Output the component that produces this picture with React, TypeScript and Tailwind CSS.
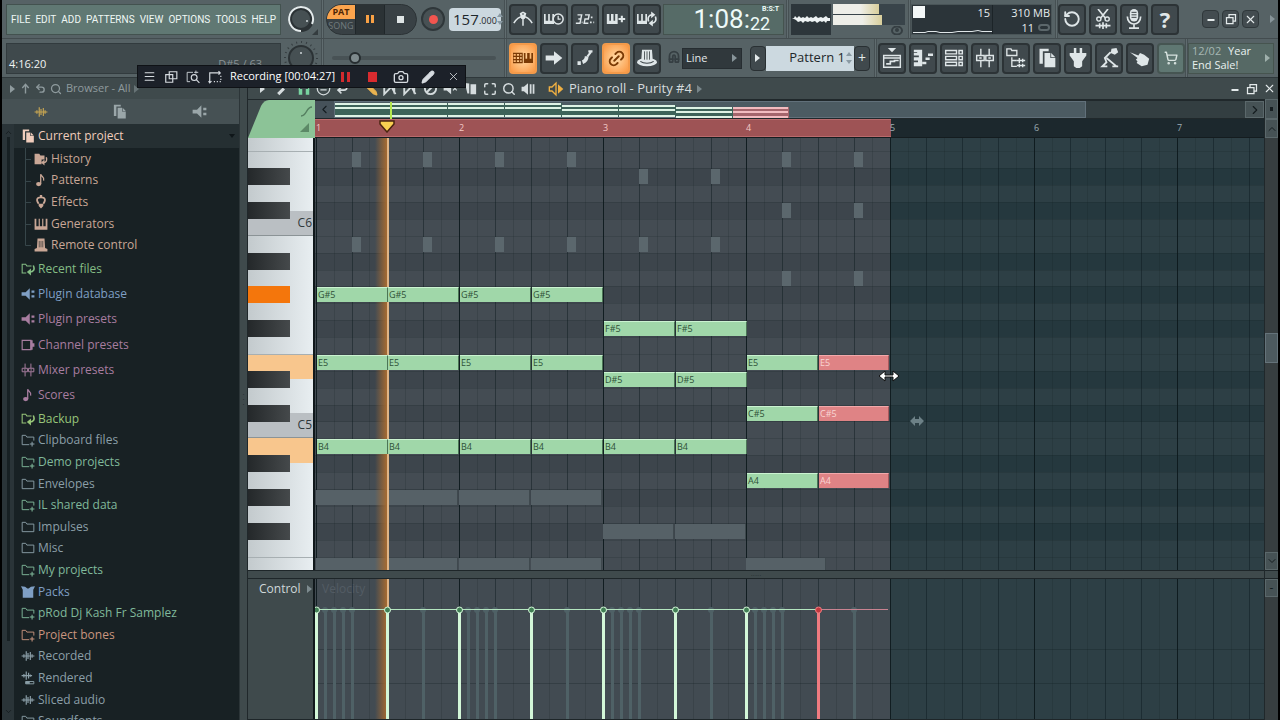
import type { ReactNode } from "react";
import {
  Camera,
  ChevronDown,
  ChevronLeft,
  ChevronRight,
  ChevronUp,
  Link2,
  Magnet,
  Maximize,
  Menu,
  Pencil,
  RotateCcw,
  Search,
  ShoppingCart,
  Undo2,
  X,
} from "lucide-react";

const BEAT = 35.9;
const ROW = 16.88;
const ROW_ORIGIN = 13.4;
const ROWS = Array.from({ length: 26 }, (_, i) => i - 1);
const BLACK_ROWS = [1, 3, 6, 8, 10, 13, 15, 18, 20, 22];
const LOOP_END = 576;

const beatX = (beat: number) => Math.round(0.6 + beat * BEAT);
const rowY = (row: number) => Math.round(ROW_ORIGIN + row * ROW);

type Note = { name: string; row: number; beat: number; selected?: boolean };

const NOTES: Note[] = [
  ...[0, 2, 4, 6].map((beat) => ({ name: "G#5", row: 8, beat })),
  ...[0, 2, 4, 6].map((beat) => ({ name: "E5", row: 12, beat })),
  ...[0, 2, 4, 6, 8, 10].map((beat) => ({ name: "B4", row: 17, beat })),
  ...[8, 10].map((beat) => ({ name: "F#5", row: 10, beat })),
  ...[8, 10].map((beat) => ({ name: "D#5", row: 13, beat })),
  { name: "E5", row: 12, beat: 12 },
  { name: "C#5", row: 15, beat: 12 },
  { name: "A4", row: 19, beat: 12 },
  { name: "E5", row: 12, beat: 14, selected: true },
  { name: "C#5", row: 15, beat: 14, selected: true },
  { name: "A4", row: 19, beat: 14, selected: true },
];

// [row, beat]
const GHOST_HITS = [
  [0, 1], [0, 3], [0, 5], [0, 7], [0, 13], [0, 15],
  [1, 9], [1, 11],
  [3, 13], [3, 15],
  [5, 1], [5, 3], [5, 5], [5, 7], [5, 9], [5, 11],
  [7, 13], [7, 15],
];

// [row, beat, length in px]
const GHOST_CHORDS = [
  [20, 0, 71], [20, 2, 71], [20, 4, 71], [20, 6, 71],
  [22, 8, 71], [22, 10, 71],
  [24, 0, 71], [24, 2, 71], [24, 4, 71], [24, 6, 71],
  [24, 12, 80],
];

const GHOST_VELOCITIES = [
  0.25, 0.5, 0.75, 1, 3, 4.25, 4.5, 4.75, 5, 7, 8.25, 8.5, 8.75, 9, 11, 12.25, 12.5, 12.75, 13, 15,
];

function Glyph({ children, size = 24, className = "" }: { children: ReactNode; size?: number; className?: string }) {
  return (
    <svg
      width={size}
      height={size}
      viewBox="0 0 24 24"
      fill="none"
      stroke="currentColor"
      strokeWidth="2"
      className={`shrink-0 ${className}`}
      aria-hidden
    >
      {children}
    </svg>
  );
}

const fill = { fill: "currentColor", stroke: "none" };

const icons = {
  metronome: (
    <>
      <path d="M1 17c3-5 6-8 11-8s8 3 11 8M12 9v11" strokeWidth="1.8" />
      <path d="M8 5l4-2 4 2-2 7h-4z" {...fill} />
      <path d="M12 5v2" stroke="#3b4347" strokeWidth="1.5" />
    </>
  ),
  waitInput: (
    <>
      <path d="M0 6h2v8h3V6h2v8h3V6h2v12H0z" {...fill} />
      <circle cx="17" cy="12" r="6" fill="#3b4347" strokeWidth="1.8" />
      <path d="M17 8v4h3" strokeWidth="1.5" />
    </>
  ),
  countdown: (
    <>
      <path d="M3 7h5l-1 5H4M7 12l-1 5H1M12 7h5l-1 5h-4l-1 5h5" strokeWidth="1.7" />
      <path d="M8 16h1M19 10h2M18 16h2M22 16h1" />
    </>
  ),
  overdub: (
    <>
      <path d="M1 6h3v8h2V6h3v8h2V6h3v12H1z" {...fill} />
      <path d="M15 12h8M19 8v8" strokeWidth="2.500" />
    </>
  ),
  loopRecord: (
    <>
      <path d="M0 6h2v8h3V6h2v8h3V6h2v12H0z" {...fill} />
      <path d="M14 15c-2-5 1-8 4-8M22 9c2 5-1 8-4 8" strokeWidth="2" />
      <path d="M17 3l5 4-5 4zM19 13l-5 4 5 4z" {...fill} />
    </>
  ),
  typing: (
    <>
      <path d="M0 6.500h11v11H0zM0 10h11M0 14h11M4 7v10M8 7v10" strokeWidth="1.4" />
      <path d="M13 6h2v7h2V6h3v7h2V6h2v12H13z" {...fill} />
    </>
  ),
  arrow: <path d="M2 9h10V4l10 8-10 8v-5H2z" {...fill} />,
  slide: (
    <>
      <path d="M3 18h4M9 17c3-1 5-3 5-7" strokeWidth="4.500" />
      <path d="M15 10l4-5M16 4h5" strokeWidth="2.500" />
    </>
  ),
  hat: (
    <>
      <ellipse cx="12" cy="17" rx="12" ry="5" {...fill} />
      <path d="M6 2h12l1 15H5z" {...fill} />
      <path d="M9 4v10M12 4v10M15 4v10" stroke="#3b4347" strokeWidth="1" />
      <path d="M4 16c4 3 12 3 16 0" stroke="#3b4347" strokeWidth="1.300" />
    </>
  ),
  playlist: (
    <>
      <path d="M2 9h20v14H2zM2 12h20" strokeWidth="1.700" />
      <path d="M7 0h10l-5 5z" {...fill} />
      <path d="M5 19h5v-3h5v-1h5" strokeWidth="2" />
    </>
  ),
  pianoRoll: (
    <>
      <path d="M1 2h10v20H1v-5h5v-2H1v-4h6V9H1V6h4V5H1z" {...fill} />
      <path d="M11 18h5M15 13h5M18 8h6" strokeWidth="3" />
    </>
  ),
  rack: (
    <path
      d="M2 3h13v4H2zM2 10h13v4H2zM2 17h13v4H2zM18 3h4v4h-4zM18 10h4v4h-4zM18 17h4v4h-4z"
      strokeWidth="1.700"
    />
  ),
  mixer: (
    <path d="M7 1v8M7 15v8M17 1v8M17 15v8M2 9h9v6H2zM13 9h9v6h-9zM5 12h3M16 12h3" strokeWidth="1.700" />
  ),
  browser: (
    <>
      <path d="M1 1h5l1 2h6v6H1zM7 11v11h6M7 15h6" strokeWidth="1.600" />
      <path d="M13 15h10M13 21h10M16 12v6M20 13v4M16 19v4M20 19v4" strokeWidth="1.700" />
    </>
  ),
  pages: (
    <>
      <path d="M3 1h11v3H7v15H3z" {...fill} />
      <path d="M9 6h7v6h6v11H9z" {...fill} />
      <path d="M17 6l5 5h-5z" {...fill} />
    </>
  ),
  plug: <path d="M7 0h3v6h4V0h3v6h5v3l-5 7v6l-3 2h-4l-3-2v-6L2 9V6h5z" {...fill} />,
  digger: (
    <>
      <path d="M15 1l6-1 2 5-4 3-5-2z" {...fill} />
      <path d="M14 5L7 12l2 5-5 5h6M9 12l12 10M16 22h7" strokeWidth="2.200" />
    </>
  ),
  hand: <path d="M0 5l10 4 2-3 5 2 6 5-2 7-7 2-6-4 1-2-2-2 2-2z" {...fill} />,
  scissors: (
    <>
      <path d="M6 0l9 11M18 0L9 11" />
      <circle cx="7" cy="12" r="2.500" strokeWidth="1.700" />
      <circle cx="17" cy="12" r="2.500" strokeWidth="1.700" />
      <path d="M3 20h18M8 17v6M12 16v8M16 17v6" strokeWidth="2" />
    </>
  ),
  mic: (
    <>
      <rect x="7" y="0" width="10" height="15" rx="5" {...fill} />
      <path d="M9 4h6M9 7h6M9 10h6" stroke="#3b4347" strokeWidth="1.200" />
      <path d="M4 9c0 12 16 12 16 0M12 18v4M6 23h12" strokeWidth="2" />
    </>
  ),
  wave: <path d="M1 12h22M5 9v6M9 4v16M12 7v10M16 5v14M19 9v6" strokeWidth="2" />,
  speaker: <path d="M1 9h7l7-7v20l-7-7H1zM18 6h5v4h-5zM18 14h5v4h-5z" {...fill} />,
  speakerBars: <path d="M1 8h4l7-6v20l-7-6H1zM15 4h3v16h-3zM20 4h3v16h-3z" {...fill} />,
  note: (
    <>
      <ellipse cx="8" cy="19" rx="4.500" ry="3.500" {...fill} />
      <path d="M11.500 19V2c1 5 7 4 5 11" strokeWidth="2.200" />
    </>
  ),
  bulb: (
    <>
      <path d="M8 15c-5-7-3-11 4-11s9 4 4 11" strokeWidth="3" />
      <path d="M8 15h8v4l-4 4-4-4zM10 0h4v4h-4z" {...fill} />
    </>
  ),
  keys: <path d="M1 3h3v13h4V3h2v13h4V3h2v13h4V3h3v19H1z" {...fill} />,
  hatSmall: (
    <>
      <path d="M6 1h12l1 16 4 2v4H1v-4l4-2z" {...fill} />
      <path d="M9 5v11M12 5v11M15 5v11" stroke="#182124" strokeWidth="1" />
    </>
  ),
  folder: <path d="M2 4h6l2 3h12v13H2z" strokeWidth="1.600" />,
  folderPlus: (
    <>
      <path d="M14 20H2V4h6l2 3h12v6" strokeWidth="1.600" />
      <path d="M15 19h8M19 15v8" strokeWidth="1.800" />
    </>
  ),
  folderBack: (
    <>
      <path d="M9 19H2V4h6l2 3h8" strokeWidth="1.800" />
      <path d="M21 6c3 6 1 11-6 11" strokeWidth="2.800" />
      <path d="M17 11v12l-7-6z" {...fill} />
    </>
  ),
  historyFolder: (
    <>
      <path d="M1 3h8l2 3h7v7h-5v8H1z" {...fill} />
      <path d="M21 9c2 5 0 9-4 9" strokeWidth="2.500" />
      <path d="M18 13v10l-6-5z" {...fill} />
    </>
  ),
  channel: (
    <>
      <path d="M2 4h15v16H2z" />
      <path d="M16 4h4v5h3v6h-3v5h-4z" {...fill} />
    </>
  ),
  packs: <path d="M0 2l7 1 4 3h2l4-3 7-1-3 6v14H3V8z" {...fill} />,
  rendered: (
    <>
      <path d="M1 8h18M5 5v6M9 1v14M13 3v10M16 6v4" />
      <path d="M8 18h14v4H8z" strokeWidth="1.600" />
      <path d="M8 18h7v4H8z" {...fill} />
    </>
  ),
};

type IconName = keyof typeof icons;

function ToolButton({ icon, label, active, tinted, children }: {
  icon?: IconName;
  label: string;
  active?: boolean;
  tinted?: boolean;
  children?: ReactNode;
}) {
  const tone = active
    ? "border-[#f39a4a] bg-[radial-gradient(#ffdca8,#fb9640)] text-[#7a3a05]"
    : tinted
      ? "border-[#465552] bg-[#5f7772] text-[#d7e2df]"
      : "border-[#2c3336] bg-[#40494d] text-[#dfe6e8]";
  return (
    <button
      type="button"
      aria-label={label}
      className={`flex h-[31px] w-7 shrink-0 items-center justify-center rounded-sm border-2 ${tone}`}
    >
      {icon ? <Glyph size={20}>{icons[icon]}</Glyph> : children}
    </button>
  );
}

const Triangle = ({ className = "" }: { className?: string }) => (
  <svg width="6" height="8" viewBox="0 0 6 8" className={`shrink-0 ${className}`} aria-hidden>
    <path d="M0 0l5 4-5 4z" fill="currentColor" />
  </svg>
);

const Divider = () => <div className="w-[3px] shrink-0 self-stretch border-x border-[#465053] bg-[#606c6f]" />;

const UpDown = () => (
  <svg width="6" height="12" viewBox="0 0 6 12" className="shrink-0 text-[#8a9aa3]" aria-hidden>
    <path d="M0 4l3-4 3 4zM0 8l3 4 3-4z" fill="currentColor" />
  </svg>
);

function Knob({ ticks }: { ticks?: boolean }) {
  return (
    <svg width="36" height="36" viewBox="0 0 36 36" aria-hidden>
      {ticks ? (
        <>
          <circle cx="18" cy="18" r="16" fill="none" stroke="#353d40" strokeWidth="2" strokeDasharray="1 4" />
          <circle cx="18" cy="18" r="12" fill="#465053" stroke="#2b3235" strokeWidth="2" />
          <circle cx="18" cy="13" r="1" fill="#cfd6d8" />
        </>
      ) : (
        <>
          <circle cx="18" cy="18" r="11" fill="#465053" stroke="#2b3235" strokeWidth="4" />
          <path d="M18 30A12 12 0 1 1 29 23" fill="none" stroke="#e3eaeb" strokeWidth="2" />
          <circle cx="24" cy="20" r="1" fill="#cfd6d8" />
          <path d="M35 28v6h-6z" fill="#343c3f" />
        </>
      )}
    </svg>
  );
}

function WindowButtons({ framed }: { framed?: boolean }) {
  const cls = framed
    ? "flex h-[18px] w-[17px] items-center justify-center rounded-sm border border-[#30383b] bg-[#434c50]"
    : "flex size-3 items-center justify-center";
  return (
    <>
      <button type="button" aria-label="Minimize" className={cls}>
        <Glyph size={12}><path d="M5 14h14" strokeWidth="4" /></Glyph>
      </button>
      <button type="button" aria-label="Restore" className={cls}>
        <Glyph size={12}><path d="M3 9h13v12H3zM8 8V3h13v13h-4" strokeWidth="2.500" /></Glyph>
      </button>
      <button type="button" aria-label="Close" className={cls}>
        <X size={13} strokeWidth={2} className="shrink-0" />
      </button>
    </>
  );
}

function TopRow() {
  return (
    <div className="flex h-[39px] items-center border-b border-[#434c4f]">
      <nav className="ml-1 flex h-[31px] w-[275px] shrink-0 items-center justify-between border border-[#43524f] bg-[#607873] px-1 font-['Roboto',sans-serif] text-[10px] text-[#eef7f4]">
        {["FILE", "EDIT", "ADD", "PATTERNS", "VIEW", "OPTIONS", "TOOLS", "HELP"].map((item) => (
          <button key={item} type="button">{item}</button>
        ))}
      </nav>
      <div className="flex w-10 shrink-0 justify-center">
        <Knob />
      </div>
      <Divider />
      <div className="ml-[2px] flex h-[31px] shrink-0 overflow-hidden rounded-full border border-[#2c3336] bg-[#394145]">
        <div className="flex w-7 flex-col text-center text-[9px] leading-[14px]">
          <button type="button" className="h-[14px] bg-[#fba44d] font-bold text-[#4d2505]">PAT</button>
          <button type="button" className="text-[#717b7e]">SONG</button>
        </div>
        <button type="button" aria-label="Pause" className="flex w-[30px] items-center justify-center border-x border-[#20272a] bg-[#2b3235]">
          <svg width="8" height="10" aria-hidden><path d="M0 1h3v8H0zM5 1h3v8H5z" fill="#f9a145" /></svg>
        </button>
        <button type="button" aria-label="Stop" className="flex w-[31px] items-center justify-center">
          <span className="size-[7px] bg-[#dfe5e6]" />
        </button>
      </div>
      <button type="button" aria-label="Record" className="ml-1 flex size-6 shrink-0 items-center justify-center rounded-full border-2 border-[#2f373a] bg-[#485154]">
        <span className="size-[9px] rounded-full bg-[#f2554f]" />
      </button>
      <label className="mr-[3px] ml-1 flex h-[23px] w-[52px] shrink-0 items-center rounded-sm bg-[#ccd8df] pl-1 text-[#1e272b]">
        <input aria-label="Tempo" defaultValue="157" className="w-[26px] bg-transparent text-[15px] outline-none" />
        <span className="mt-1 flex-1 text-[9px]">.000</span>
        <UpDown />
      </label>
      <Divider />
      <div className="mx-[2px] flex shrink-0 gap-[3px]">
        <ToolButton icon="metronome" label="Metronome" />
        <ToolButton icon="waitInput" label="Wait for input" />
        <ToolButton icon="countdown" label="Countdown" />
        <ToolButton icon="overdub" label="Overdub" />
        <ToolButton icon="loopRecord" label="Loop record" />
      </div>
      <div className="flex h-[31px] w-[121px] shrink-0 items-center justify-end border border-[#45534f] bg-[#566b67] pr-1 font-['Roboto',sans-serif] text-[#eefaf8]">
        <span className="text-[26px] leading-none">1:08:</span>
        <span className="flex flex-col">
          <span className="pl-3 text-[7px] leading-[9px] font-bold">B:S:T</span>
          <span className="text-[18px] leading-[20px]">22</span>
        </span>
      </div>
      <div className="w-[2px]" />
      <Divider />
      <div className="ml-[2px] flex h-[31px] shrink-0 gap-[2px]">
        <svg width="40" height="31" className="bg-[#2d363b]" aria-hidden>
          <path
            d="M1 14h2l1-2 2 2 2-2 2 2 2-1 2 1 2-2 2 2 2-1 2 1 3-2 2 2 3-1 2 1 3-2 2 2h2v3h-3l-1 2-2-2-2 1-2-1-3 2-2-2-3 1-2-1-2 1-3-1-2 2-2-2-3 1-2-2z"
            fill="#eef3f4"
          />
        </svg>
        <div className="w-[72px]">
          <div className="flex h-[21px] flex-col gap-px bg-[#39444a]">
            <div className="h-[10px] w-[46px] bg-[linear-gradient(90deg,#eeeee8_60%,#d9cf9b)]" />
            <div className="h-[10px] w-[49px] bg-[linear-gradient(90deg,#eeeee8_60%,#d9cf9b)]" />
          </div>
          <svg width="12" height="9" viewBox="0 0 12 9" className="ml-[58px] mt-px" aria-hidden>
            <ellipse cx="6" cy="4.500" rx="5" ry="4" fill="none" stroke="#353e42" strokeWidth="2" />
            <circle cx="6" cy="4" r="2" fill="#353e42" />
          </svg>
        </div>
      </div>
      <div className="w-[3px]" />
      <Divider />
      <div className="mr-[3px] flex h-[31px] w-[141px] shrink-0 border border-[#4a5558] bg-[#2b3439] text-[11px] leading-[15px] text-[#e6edef]">
        <div className="flex w-[81px] flex-col justify-between border-r border-[#1c2428]">
          <div className="flex justify-between pr-[2px]">
            <span className="m-px size-3 bg-[#f3f7f7]" />
            15
          </div>
          <svg width="80" height="6" aria-hidden>
            <path d="M1 4.500h12l3-1h8l4 1h12l6-1h14l6-1 4 1h10" fill="none" stroke="#dfe6e8" />
          </svg>
        </div>
        <div className="flex-1 pr-px text-right">
          <div>310 MB</div>
          <div className="flex items-center justify-end gap-1">
            11
            <span className="h-[7px] w-3 rounded-full border-2 border-[#5c676b]" />
          </div>
        </div>
      </div>
      <Divider />
      <div className="flex shrink-0 gap-[3px]">
        <ToolButton label="Undo"><RotateCcw size={18} strokeWidth={2.5} /></ToolButton>
        <ToolButton icon="scissors" label="Edit audio" />
        <ToolButton icon="mic" label="Record audio" />
        <ToolButton label="Help"><span className="text-[22px] font-bold">?</span></ToolButton>
      </div>
      <div className="ml-auto flex items-center gap-[3px] pr-[2px] text-[#e4eaeb]">
        <WindowButtons framed />
        <Triangle className="ml-2 text-[#88959a]" />
      </div>
    </div>
  );
}

function SecondRow() {
  return (
    <div className="flex h-[38px] items-center">
      <div className="ml-1 flex h-[31px] w-[275px] shrink-0 items-end justify-between border border-[#323b3e] bg-[#3f494c] px-[2px] text-[11px] text-[#f0f4f4]">
        <span>4:16:20</span>
        <span className="pr-4 text-[#899396]">D#5 / 63</span>
      </div>
      <div className="flex w-10 shrink-0 justify-center">
        <Knob ticks />
      </div>
      <Divider />
      <input
        type="range"
        aria-label="Song position"
        defaultValue={11}
        className="mx-2 h-1 w-[164px] shrink-0 appearance-none rounded bg-[#485255] [&::-webkit-slider-thumb]:size-3 [&::-webkit-slider-thumb]:appearance-none [&::-webkit-slider-thumb]:rounded-full [&::-webkit-slider-thumb]:border-2 [&::-webkit-slider-thumb]:border-[#262d30] [&::-webkit-slider-thumb]:bg-[#7e8a8d]"
      />
      <Divider />
      <div className="mx-[2px] flex shrink-0 gap-[3px]">
        <ToolButton icon="typing" label="Typing keyboard" active />
        <ToolButton icon="arrow" label="Step edit" />
        <ToolButton icon="slide" label="Auto scroll" />
        <ToolButton label="Link" active><Link2 size={19} strokeWidth={2.5} className="-rotate-45" /></ToolButton>
        <ToolButton icon="hat" label="Multilink controllers" />
      </div>
      <Magnet size={14} strokeWidth={3} className="mr-px ml-1 -rotate-45 shrink-0 text-[#353e42]" />
      <div className="relative flex h-[21px] w-[60px] shrink-0 items-center border border-[#262d31] bg-[#30383c] text-[11px] text-[#e3e9ea]">
        <select aria-label="Snap" className="h-full w-full appearance-none bg-transparent pl-[3px] outline-none">
          <option>Line</option>
        </select>
        <Triangle className="absolute right-[3px] text-[#88959a]" />
      </div>
      <button type="button" aria-label="Pattern menu" className="ml-2 flex h-[25px] w-4 shrink-0 items-center justify-center rounded-sm border border-[#293033] bg-[#40494d] text-[#e3e9ea]">
        <Triangle />
      </button>
      <div className="flex h-[25px] w-[88px] shrink-0 items-center bg-[#ccd9e0] pr-[2px] text-[13px] text-[#1e272b]">
        <select aria-label="Pattern" className="min-w-0 flex-1 appearance-none bg-transparent pr-px text-right outline-none [text-align-last:right]">
          <option>Pattern 1</option>
        </select>
        <UpDown />
      </div>
      <button type="button" aria-label="Add pattern" className="mr-1 h-[25px] w-4 shrink-0 rounded-sm border border-[#293033] bg-[#40494d] text-sm leading-none text-[#e3e9ea]">
        +
      </button>
      <Divider />
      <div className="ml-px flex shrink-0 gap-[3px]">
        <ToolButton icon="playlist" label="Playlist" />
        <ToolButton icon="pianoRoll" label="Piano roll" />
        <ToolButton icon="rack" label="Channel rack" />
        <ToolButton icon="mixer" label="Mixer" />
        <ToolButton icon="browser" label="Browser" />
        <ToolButton icon="pages" label="Project picker" />
        <ToolButton icon="plug" label="Plugin picker" />
        <ToolButton icon="digger" label="Tempo tapper" />
        <ToolButton icon="hand" label="Touch controllers" />
        <ToolButton label="Shop" tinted><ShoppingCart size={14} strokeWidth={2.5} /></ToolButton>
      </div>
      <Divider />
      <a href="#news" className="mr-1 flex h-[31px] flex-1 items-center justify-between border border-[#46544f] bg-[#566965] pr-[2px] pl-[3px] text-[11px] leading-[14px] whitespace-nowrap text-[#e8f1ef]">
        <span>
          <span className="mr-1 text-[#a6b7b3]">12/02</span> Year
          <br />
          End Sale!
        </span>
        <Triangle className="text-[#9fb0ac]" />
      </a>
    </div>
  );
}

function RecorderBar() {
  return (
    <div className="absolute top-[65px] left-[135px] flex h-[23px] w-[329px] items-center gap-2 border border-[#0f1216] bg-[#1c2129] px-[5px] text-[#d6dbe0]">
      <Menu size={13} className="shrink-0" />
      <Glyph size={14}><path d="M3 8h12v13H3zM9 3h13v12H9z" /></Glyph>
      <Glyph size={14}><path d="M2 4h10M2 4v16h5M17 1v5M14 4h7" strokeWidth="1.500" /><circle cx="14" cy="13" r="5" /><path d="M18 17l5 5" /></Glyph>
      <Glyph size={14}><path d="M3 22V5h18M18 2l3 3-3 3M1 19l2 3 3-3" /><path d="M10 20h12V9" strokeDasharray="2 3" /></Glyph>
      <span className="w-[103px] shrink-0 text-[11px] whitespace-nowrap text-white">Recording [00:04:27]</span>
      <button type="button" aria-label="Pause recording" className="flex gap-[3px]">
        <span className="h-[10px] w-[3px] bg-[#d32a2e]" />
        <span className="h-[10px] w-[3px] bg-[#d32a2e]" />
      </button>
      <button type="button" aria-label="Stop recording" className="mr-2 ml-[10px] size-[10px] bg-[#d92b2f]" />
      <button type="button" aria-label="Take picture" className="mr-1"><Camera size={16} /></button>
      <button type="button" aria-label="Draw" className="mr-1"><Pencil size={14} fill="currentColor" /></button>
      <button type="button" aria-label="Close recorder"><X size={13} strokeWidth={1.5} /></button>
    </div>
  );
}

type Item = { label: string; icon: IconName; color: string };

const PROJECT_ITEMS: Item[] = [
  { label: "History", icon: "historyFolder", color: "text-[#c9a796]" },
  { label: "Patterns", icon: "note", color: "text-[#c9a796]" },
  { label: "Effects", icon: "bulb", color: "text-[#c9a796]" },
  { label: "Generators", icon: "keys", color: "text-[#c9a796]" },
  { label: "Remote control", icon: "hatSmall", color: "text-[#c9a796]" },
];

const PRESET_ITEMS: Item[] = [
  { label: "Recent files", icon: "folderBack", color: "text-[#84bd84]" },
  { label: "Plugin database", icon: "speaker", color: "text-[#7f9fc4]" },
  { label: "Plugin presets", icon: "speaker", color: "text-[#a87da0]" },
  { label: "Channel presets", icon: "channel", color: "text-[#a87da0]" },
  { label: "Mixer presets", icon: "mixer", color: "text-[#a87da0]" },
  { label: "Scores", icon: "note", color: "text-[#a87da0]" },
];

const FOLDER_ITEMS: Item[] = [
  { label: "Backup", icon: "folderBack", color: "text-[#97c579]" },
  { label: "Clipboard files", icon: "folderPlus", color: "text-[#8b9fa8]" },
  { label: "Demo projects", icon: "folderPlus", color: "text-[#80b99b]" },
  { label: "Envelopes", icon: "folder", color: "text-[#8b9fa8]" },
  { label: "IL shared data", icon: "folderPlus", color: "text-[#80b99b]" },
  { label: "Impulses", icon: "folder", color: "text-[#8b9fa8]" },
  { label: "Misc", icon: "folder", color: "text-[#8b9fa8]" },
  { label: "My projects", icon: "folderPlus", color: "text-[#80b99b]" },
  { label: "Packs", icon: "packs", color: "text-[#7f9fc4]" },
  { label: "pRod Dj Kash Fr Samplez", icon: "folderPlus", color: "text-[#80b99b]" },
  { label: "Project bones", icon: "folderPlus", color: "text-[#c9957f]" },
  { label: "Recorded", icon: "wave", color: "text-[#8b9fa8]" },
  { label: "Rendered", icon: "rendered", color: "text-[#8b9fa8]" },
  { label: "Sliced audio", icon: "wave", color: "text-[#8b9fa8]" },
  { label: "Soundfonts", icon: "folder", color: "text-[#8b9fa8]" },
];

function ItemList({ items, className }: { items: Item[]; className: string }) {
  return (
    <ul className={`flex shrink-0 flex-col ${className}`}>
      {items.map((item) => (
        <li key={item.label} className={`flex flex-1 items-center gap-[3px] ${item.color}`}>
          <Glyph size={14}>{icons[item.icon]}</Glyph>
          {item.label}
        </li>
      ))}
    </ul>
  );
}

function Sidebar() {
  return (
    <aside className="flex w-[238px] shrink-0 flex-col border-r border-[#2c3538]">
      <div className="flex h-[22px] shrink-0 items-center gap-1 border-t border-[#2f383b] pl-2 text-[11px] text-[#8f9b9e]">
        <Triangle />
        <Glyph size={11}><path d="M12 23V4M5 11l7-8 7 8" strokeWidth="3" /></Glyph>
        <Undo2 size={11} strokeWidth={3} />
        <Search size={12} strokeWidth={2.5} />
        <span>Browser - All</span>
        <Triangle className="text-[#677376]" />
      </div>
      <div className="flex h-[25px] shrink-0 items-center justify-around bg-[#465154] text-[#9aa6a9]">
        <Glyph size={14} className="text-[#c5a452]">{icons.wave}</Glyph>
        <Glyph size={15}>{icons.pages}</Glyph>
        <Glyph size={15}>{icons.speaker}</Glyph>
      </div>
      <div className="flex min-h-0 flex-1 bg-[#182124]">
        <div className="flex w-3 shrink-0 flex-col items-center justify-between bg-[#2a3438] py-1 text-[#11181b]">
          <ChevronUp size={9} />
          <div className="mb-[66px] w-[3px] flex-1 bg-[#172023]" />
          <ChevronDown size={9} />
        </div>
        <div className="min-w-0 flex-1 overflow-hidden text-xs">
          <div className="flex h-6 items-center gap-[3px] bg-[#252f32] pr-1 pl-[7px] text-[#f0cdbc]">
            <Glyph size={14}>{icons.pages}</Glyph>
            <span className="flex-1">Current project</span>
            <svg width="6" height="4" aria-hidden><path d="M0 0h6L3 4z" fill="#0f1619" /></svg>
          </div>
          <div className="relative">
            <svg width="8" height="98" className="absolute left-[11px] top-0" aria-hidden>
              <path d="M.5 0v97.500H6M1 11.500h5M1 33.500h5M1 54.500h5M1 76.500h5" fill="none" stroke="#37464a" />
            </svg>
            <ItemList items={PROJECT_ITEMS} className="h-[108px] pl-5" />
          </div>
          <ItemList items={PRESET_ITEMS} className="h-[152px] pl-[7px]" />
          <ItemList items={FOLDER_ITEMS} className="h-[324px] pl-[7px]" />
        </div>
      </div>
    </aside>
  );
}

function EditorTitle() {
  return (
    <div className="flex h-[22px] shrink-0 items-center gap-[5px] border-t border-[#2f383b] pr-[3px] pl-3 text-[13px] text-[#d5dcde]">
      <Triangle className="mr-[6px]" />
      <Glyph size={15}><path d="M2 21l9-9" strokeWidth="5" /><path d="M21 4l-5 4-3-3 3-3c-5-1-8 5-5 8 3 3 10 0 10-6z" {...fill} /></Glyph>
      <Glyph size={14} className="text-[#78d3a0]"><path d="M4 13C2 1 22 1 20 13" /><path d="M3 12h6v10H3zM15 12h6v10h-6z" {...fill} /></Glyph>
      <Glyph size={15}><circle cx="12" cy="12" r="10" /><path d="M7 10h10M7 14h10" /></Glyph>
      <Undo2 size={13} strokeWidth={3} className="-scale-y-100" />
      <Pencil size={14} fill="currentColor" className="ml-[10px] -scale-x-100 text-[#e9b350]" />
      <Glyph size={15}><path d="M2 3v18l9-9-3-4M12 7l8 14M18 8v12" strokeWidth="3" /></Glyph>
      <Glyph size={15}><path d="M2 3v18l9-9-3-4M12 7l8 14M18 8v12" strokeWidth="3" /></Glyph>
      <Glyph size={15}><circle cx="12" cy="12" r="9" strokeWidth="3" /><path d="M6 18L18 6" strokeWidth="3" /></Glyph>
      <Glyph size={15}><path d="M1 9h5l7-6v18l-7-6H1z" {...fill} /><path d="M16 9l6 6M22 9l-6 6" /></Glyph>
      <Glyph size={15}><path d="M3 3l7 1v16H7zM12 5h9v16h-9z" {...fill} /></Glyph>
      <Maximize size={14} strokeWidth={2.5} />
      <Search size={14} strokeWidth={2.5} />
      <Glyph size={14}>{icons.speakerBars}</Glyph>
      <Glyph size={16} className="ml-2 text-[#f0b042]"><path d="M2 9h4l6-6v18l-6-6H2z" /><path d="M15 5l8 7-8 7z" {...fill} /></Glyph>
      <h1>Piano roll - Purity #4</h1>
      <Triangle className="text-[#78868a]" />
      <div className="ml-auto flex gap-[5px] text-[#e4eaeb]">
        <WindowButtons />
      </div>
    </div>
  );
}

// [start, width, line offsets, selected]
const MINIMAP: [number, number, number[], boolean][] = [
  [0, 113, [2, 6, 14], false],
  [113, 57, [2, 6, 14], false],
  [170, 57, [2, 6, 14], false],
  [227, 57, [4, 8, 14], false],
  [284, 57, [4, 8, 14], false],
  [341, 57, [6, 10, 15], false],
  [398, 56, [6, 10, 15], true],
];

function Overview() {
  return (
    <div className="flex h-[19px] border-y border-[#20282b]">
      <button type="button" aria-label="Scroll left" className="flex w-[19px] shrink-0 items-center justify-center bg-[#46525a] text-[#151d20]">
        <ChevronLeft size={13} />
      </button>
      <div className="min-w-0 flex-1 bg-[#333e41]">
        <div className="h-full w-[752px] border border-[#61707a] bg-[#4c5b62]">
          <svg width="460" height="17" aria-hidden>
            {MINIMAP.map(([x, w, lines, selected]) => (
              <g key={x}>
                <rect x={x} y={lines[0] - 1} width={w} height={lines[2] - lines[0] + 2} fill={selected ? "#a4656c" : "#3d6359"} />
                {lines.map((y) => (
                  <rect key={y} x={x} y={y - 1} width={w - 1} height="2" fill={selected ? "#f2bcc0" : "#def3e5"} />
                ))}
              </g>
            ))}
            <rect x="55" y="0" width="2" height="17" fill="#b5e84e" />
          </svg>
        </div>
      </div>
      <button type="button" aria-label="Scroll right" className="flex w-[19px] shrink-0 items-center justify-center border border-[#5b686b] bg-[#465255] text-[#151d20]">
        <ChevronRight size={14} />
      </button>
    </div>
  );
}

function Ruler() {
  return (
    <div className="relative h-[19px] overflow-hidden border-b border-[#141c1f] bg-[#1c282d] text-[9px] leading-[18px] text-[#9cadb3]">
      <div className="h-full w-[576px] border-y border-[#b96a6c] bg-[#9e5355]" />
      {[1, 2, 3, 4, 5, 6, 7].map((bar) => (
        <span
          key={bar}
          className={`absolute top-0 ${bar < 5 ? "text-[#f3c9c7]" : ""}`}
          style={{ left: beatX((bar - 1) * 4) }}
        >
          {bar}
        </span>
      ))}
      <svg width="16" height="13" viewBox="0 0 16 13" className="absolute top-[1px] left-[64px]" aria-hidden>
        <path d="M1 1h14v3l-7 8-7-8z" fill="#f8cf51" stroke="#4a2410" strokeWidth="1.500" />
      </svg>
    </div>
  );
}

function Keyboard() {
  return (
    <div className="relative w-[67px] shrink-0 overflow-hidden border-r-2 border-[#10181b] bg-[linear-gradient(90deg,#c3cacd,#e8eef1)] text-xs text-[#30383b]">
      {[4, 16].map((row) => (
        <div
          key={row}
          className="absolute inset-x-0 flex h-[25px] items-end justify-end border-b border-[#8b9396] bg-[#babfc3] pr-px pb-1 leading-4"
          style={{ top: rowY(row) - 8 }}
        >
          {row === 4 ? "C6" : "C5"}
        </div>
      ))}
      {[12, 17].map((row) => (
        <div key={row} className="absolute inset-x-0 h-[25px] bg-[#f8c68d]" style={{ top: rowY(row) }} />
      ))}
      {[0, 12, 24].map((row) => (
        <div key={row} className="absolute inset-x-0 h-px bg-[#a7afb2]" style={{ top: rowY(row) }} />
      ))}
      {BLACK_ROWS.map((row) => (
        <div
          key={row}
          className={`absolute left-0 h-[17px] w-[42px] ${row === 8 ? "bg-[#f4760c]" : "bg-[linear-gradient(90deg,#24282a,#45494b)]"}`}
          style={{ top: rowY(row) }}
        />
      ))}
    </div>
  );
}

function BeatLines() {
  return (
    <>
      {Array.from({ length: 56 }, (_, i) => {
        const x = beatX(i / 2);
        const bar = i % 8 === 0;
        const beat = i % 2 === 0;
        return (
          <rect
            key={i}
            x={x}
            y="0"
            width="1"
            height="100%"
            fill="#0c181c"
            opacity={bar ? 0.9 : beat ? 0.45 : 0.15}
          />
        );
      })}
    </>
  );
}

const Playhead = () => (
  <div className="absolute inset-y-0 left-[60px] w-[14px] border-r-2 border-[#e0b587] bg-[linear-gradient(90deg,transparent,#a56a31)]" />
);

function NoteGrid() {
  return (
    <div className="relative min-w-0 flex-1 overflow-hidden bg-[#2d3f45]">
      <svg width="100%" height="100%" className="absolute inset-0" aria-hidden>
        <rect width={LOOP_END} height="100%" fill="#444c53" />
        {ROWS.map((row) => (
          <g key={row}>
            {BLACK_ROWS.includes(row) && (
              <>
                <rect x={LOOP_END} y={rowY(row)} width="100%" height="17" fill="#25383e" />
                <rect y={rowY(row)} width={LOOP_END} height="17" fill="#3d454c" />
              </>
            )}
            <rect y={rowY(row)} width="100%" height="1" fill="#0c181c" opacity="0.15" />
          </g>
        ))}
        <BeatLines />
      </svg>
      {GHOST_CHORDS.map(([row, beat, width]) => (
        <div
          key={`${row}-${beat}`}
          className="absolute h-[15px] border-r border-[#3f494e] bg-[#566167]"
          style={{ left: beatX(beat), top: rowY(row) + 1, width }}
        />
      ))}
      {GHOST_HITS.map(([row, beat]) => (
        <div
          key={`${row}-${beat}`}
          className="absolute h-[15px] w-[9px] bg-[#5b676d]"
          style={{ left: beatX(beat), top: rowY(row) + 1 }}
        />
      ))}
      <Playhead />
      {NOTES.map((note) => (
        <div
          key={`${note.name}-${note.beat}`}
          className={`absolute h-[15px] border-t border-r pl-px text-[9px] leading-[14px] ${
            note.selected
              ? "w-[70px] border-t-[#f3a9ab] border-r-[#a8595c] bg-[#df8385] text-[#f9d5d3]"
              : "w-[71px] border-t-[#cbf3d1] border-r-[#4c7556] bg-[#a0d7a9] text-[#2f5137]"
          }`}
          style={{ left: beatX(note.beat) + 1, top: rowY(note.row) + 1 }}
        >
          {note.name}
        </div>
      ))}
      <svg width="20" height="12" viewBox="0 0 20 12" className="absolute top-[232px] left-[564px]" aria-hidden>
        <path d="M0 6l6-5v4h8V1l6 5-6 5V7H6v4z" fill="#fff" stroke="#101010" />
      </svg>
      <svg width="14" height="12" viewBox="0 0 14 12" className="absolute top-[277px] left-[595px]" aria-hidden>
        <path d="M0 6l5-5v3h4V1l5 5-5 5V8H5v3z" fill="#6d8187" />
      </svg>
    </div>
  );
}

function VelocityLane() {
  return (
    <div className="relative min-w-0 flex-1 overflow-hidden bg-[#2d3f45]">
      <svg width="100%" height="100%" className="absolute inset-0" aria-hidden>
        <rect width={LOOP_END} height="100%" fill="#424b52" />
        <path d="M0 70.500h950M0 104.500h950" stroke="#0c181c" strokeOpacity="0.250" />
        <BeatLines />
        {GHOST_VELOCITIES.map((beat) => (
          <g key={beat} fill="#4f6166">
            <rect x={beatX(beat) - 1} y="30" width="3" height="120" />
            <circle cx={beatX(beat)} cy="31" r="3" />
          </g>
        ))}
      </svg>
      <span className="absolute top-[2px] left-[7px] text-xs text-[#535c64]">Velocity</span>
      <Playhead />
      <svg width="100%" height="100%" className="absolute inset-0" aria-hidden>
        {[0, 2, 4, 6, 8, 10, 12, 14].map((beat) => {
          const x = beatX(beat);
          const selected = beat === 14;
          const color = selected ? "#f07b80" : "#d3f7d8";
          return (
            <g key={beat}>
              <rect x={x} y="30" width={selected ? 70 : 72} height="1" fill={selected ? "#c98391" : "#b3e5bf"} />
              <rect x={x - 1} y="31" width="3" height="120" fill={color} />
              <circle cx={x + 0.5} cy="31" r="3" fill={selected ? "#c2383e" : "#417f55"} stroke={color} strokeWidth="1" />
            </g>
          );
        })}
      </svg>
    </div>
  );
}

const scrollButton = "flex w-full shrink-0 items-center justify-center border border-[#5b686b] bg-[#465255] text-[#151d20]";

function Editor() {
  return (
    <section className="flex min-w-0 flex-1 flex-col">
      <EditorTitle />
      <div className="flex min-h-0 flex-1">
        <div className="flex min-w-0 flex-1 flex-col">
          <div className="flex h-[39px] shrink-0 border-t border-[#20282b]">
            <svg width="67" height="38" viewBox="0 0 67 38" className="shrink-0" aria-hidden>
              <path d="M0 38L13 6q3-6 8-6h46v38z" fill="#8cc397" />
              <path d="M53 16c6 0 5-9 11-9" fill="none" stroke="#557f60" strokeWidth="1.500" />
              <path d="M52 32l9-9v9z" fill="#5c8967" />
            </svg>
            <div className="min-w-0 flex-1">
              <Overview />
              <Ruler />
            </div>
          </div>
          <div className="flex min-h-0 flex-1">
            <Keyboard />
            <NoteGrid />
          </div>
          <div className="flex h-[9px] shrink-0 items-center justify-center border-y border-[#1e2629] text-[8px] leading-none text-[#273033]">
            ·····
          </div>
          <div className="flex h-[141px] shrink-0 border-b border-[#1e2629]">
            <div className="flex w-[67px] shrink-0 items-start justify-between border-r-2 border-[#10181b] pt-[2px] pl-[11px] text-xs text-[#cfd8da]">
              Control
              <Triangle className="mt-1 text-[#7d8b8f]" />
            </div>
            <VelocityLane />
          </div>
        </div>
        <div className="flex w-[14px] shrink-0 flex-col border-l border-[#20282b]">
          <button type="button" aria-label="Zoom" className={`${scrollButton} h-[20px]`}>
            <span className="h-1 w-[3px] bg-[#151d20]" />
          </button>
          <button type="button" aria-label="Scroll up" className={`${scrollButton} h-[19px]`}><ChevronUp size={12} className="shrink-0" /></button>
          <div className="flex min-h-0 flex-1 flex-col bg-[#373e40]">
            <div className="flex-[195_0_0]" />
            <div className="h-[30px] border border-[#65737a] bg-[#4d5a5f]" />
            <div className="flex-[189_0_0]" />
          </div>
          <button type="button" aria-label="Scroll down" className={`${scrollButton} h-[18px]`}><ChevronDown size={12} className="shrink-0" /></button>
          <div className="h-[9px] shrink-0 border-y border-[#1e2629]" />
          <button type="button" aria-label="Shrink lane" className={`${scrollButton} h-[18px] text-xs leading-none`}>-</button>
          <div className="h-[123px] shrink-0 bg-[#373e40]" />
        </div>
      </div>
    </section>
  );
}

export default function App() {
  return (
    <main className="relative flex h-screen flex-col overflow-hidden border-x-2 border-black bg-[#3f4a4c] font-['Open_Sans','Noto_Sans',sans-serif]">
      <header className="shrink-0 bg-[#566265]">
        <TopRow />
        <SecondRow />
      </header>
      <div className="flex min-h-0 flex-1">
        <Sidebar />
        <div className="flex w-2 shrink-0 flex-col items-center justify-center border-r border-[#20282b] text-[8px] leading-[5px] text-[#20282b]">
          <span>·</span>
          <span>·</span>
          <span>·</span>
        </div>
        <Editor />
      </div>
      <RecorderBar />
    </main>
  );
}
